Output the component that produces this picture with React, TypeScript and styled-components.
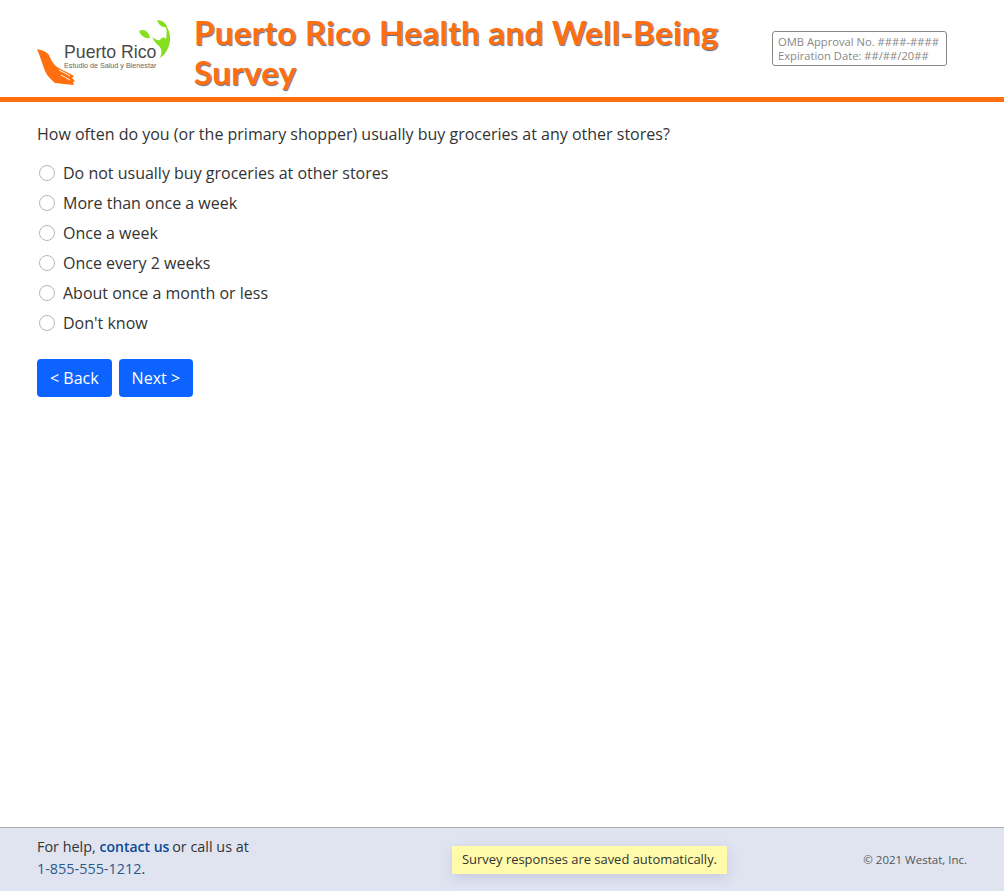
import styled, { createGlobalStyle } from "styled-components";

const options = [
  "Do not usually buy groceries at other stores",
  "More than once a week",
  "Once a week",
  "Once every 2 weeks",
  "About once a month or less",
  "Don't know",
];

const GlobalStyle = createGlobalStyle`
  * {
    box-sizing: border-box;
  }
  body {
    margin: 0;
    background: #fff;
    font-family: "Open Sans", "Noto Sans", sans-serif;
    color: #333;
  }
`;

const Logo = () => (
  <LogoSvg viewBox="0 0 140 72" width="140" height="72">
    <path
      d="M0 33 C5 34 10 36 12 39 C14 44 16 48 20 51 C25 54 32 57 37 60 L35 62 L38 65 L36 66 L37 69 C30 68 24 68 18 67 C14 63 10 60 8 55 C5 47 3 40 0 33 Z"
      fill="#ff6f0f"
    />
    <path d="M22 54 C26 56 30 58 33 60" stroke="#fff" strokeWidth="1" fill="none" />
    <path d="M24 59 C27 61 30 62 33 64" stroke="#fff" strokeWidth="1" fill="none" />
    <path d="M120 4 C125 4 129 7 130 11 C125 12 122 9 120 4 Z" fill="#84e01e" />
    <path d="M102 15 C107 12 112 16 113 22 C108 23 104 20 102 15 Z" fill="#84e01e" />
    <path
      d="M128 8 C133 14 135 24 131 32 C129 37 126 40 123 42 C125 37 125 33 122 30 C119 28 117 25 115 21 C118 23 121 25 123 24 C125 21 127 21 129 23 C130 18 130 13 128 8 Z"
      fill="#84e01e"
    />
    <LogoName x="27" y="42">Puerto Rico</LogoName>
    <LogoTagline x="27" y="52">Estudio de Salud y Bienestar</LogoTagline>
  </LogoSvg>
);

export default function App() {
  return (
    <Page>
      <GlobalStyle />
      <Header>
        <LogoBox>
          <Logo />
        </LogoBox>
        <Title>Puerto Rico Health and Well-Being Survey</Title>
        <OmbBox>
          OMB Approval No. ####-####
          <br />
          Expiration Date: ##/##/20##
        </OmbBox>
      </Header>
      <Main>
        <Question>How often do you (or the primary shopper) usually buy groceries at any other stores?</Question>
        <OptionList>
          {options.map((option) => (
            <OptionRow key={option}>
              <RadioCircle type="radio" name="frequency" />
              {option}
            </OptionRow>
          ))}
        </OptionList>
        <Buttons>
          <NavButton type="button">&lt; Back</NavButton>
          <NavButton type="button">Next &gt;</NavButton>
        </Buttons>
      </Main>
      <Footer>
        <Help>
          For help, <ContactLink href="#">contact us</ContactLink> or call us at
          <br />
          <Phone>1-855-555-1212</Phone>.
        </Help>
        <SavedNote>Survey responses are saved automatically.</SavedNote>
        <Copyright>© 2021 Westat, Inc.</Copyright>
      </Footer>
    </Page>
  );
}

const Page = styled.div`
  display: flex;
  flex-direction: column;
  min-height: 891px;
  height: 891px;
`;

const Header = styled.header`
  display: flex;
  align-items: center;
  height: 102px;
  padding: 0 57px 0 37px;
  border-bottom: 5px solid #ff6f0f;
`;

const LogoBox = styled.div`
  flex: 0 0 157px;
  height: 72px;
  margin-top: 7px;
`;

const LogoSvg = styled.svg`
  display: block;
`;

const LogoName = styled.text`
  font-family: "Liberation Sans", Arial, sans-serif;
  font-size: 17.7px;
  fill: #4a4a4a;
`;

const LogoTagline = styled.text`
  font-family: "Liberation Sans", Arial, sans-serif;
  font-size: 7.2px;
  fill: #666;
`;

const Title = styled.h1`
  flex: 0 0 578px;
  margin: 7px 0 0;
  font-family: "Lato", "Noto Sans", sans-serif;
  font-size: 33px;
  font-weight: 700;
  line-height: 40px;
  letter-spacing: 0.42px;
  color: #ff6f0f;
  text-shadow: 1px 1px 1px #5a6a8a;
`;

const OmbBox = styled.div`
  flex: 0 0 175px;
  height: 35px;
  padding: 3px 5px;
  border: 1px solid #888;
  border-radius: 3px;
  font-size: 11.2px;
  line-height: 14px;
  color: #888;
  white-space: nowrap;
`;

const Main = styled.main`
  flex: 1;
  padding: 21px 37px 0;
`;

const Question = styled.p`
  margin: 0 0 13px;
  font-size: 16px;
  line-height: 22px;
`;

const OptionList = styled.div`
  display: flex;
  flex-direction: column;
`;

const OptionRow = styled.label`
  display: flex;
  align-items: center;
  gap: 8px;
  height: 30px;
  padding-left: 2px;
  font-size: 16px;
`;

const RadioCircle = styled.input`
  appearance: none;
  width: 16px;
  height: 16px;
  margin: 0;
  background: #fff;
  border: 1px solid #b3b8c0;
  border-radius: 50%;
`;

const Buttons = styled.div`
  display: flex;
  gap: 7px;
  margin-top: 21px;
`;

const NavButton = styled.button`
  height: 38px;
  padding: 0 13px;
  background: #0d63ff;
  border: none;
  border-radius: 4px;
  color: #fff;
  font-family: inherit;
  font-size: 16px;
`;

const Footer = styled.footer`
  display: flex;
  align-items: center;
  height: 64px;
  padding: 0 37px;
  background: #e0e4f1;
  border-top: 1px solid #a9abb2;
`;

const Help = styled.div`
  flex: 0 0 415px;
  padding-bottom: 3px;
  font-size: 14.4px;
  line-height: 22px;
`;

const ContactLink = styled.a`
  color: #0b4a94;
  font-size: 14px;
  font-weight: 600;
  text-decoration: none;
  margin-right: -1px;
`;

const Phone = styled.span`
  color: #2b5a8c;
`;

const SavedNote = styled.div`
  padding: 4px 10px 6px;
  background: #fffbaa;
  box-shadow: 0 4px 12px rgba(120, 130, 170, 0.25);
  font-size: 12.95px;
  line-height: 18px;
  white-space: nowrap;
`;

const Copyright = styled.div`
  margin-left: auto;
  font-size: 11.5px;
  color: #555;
`;
